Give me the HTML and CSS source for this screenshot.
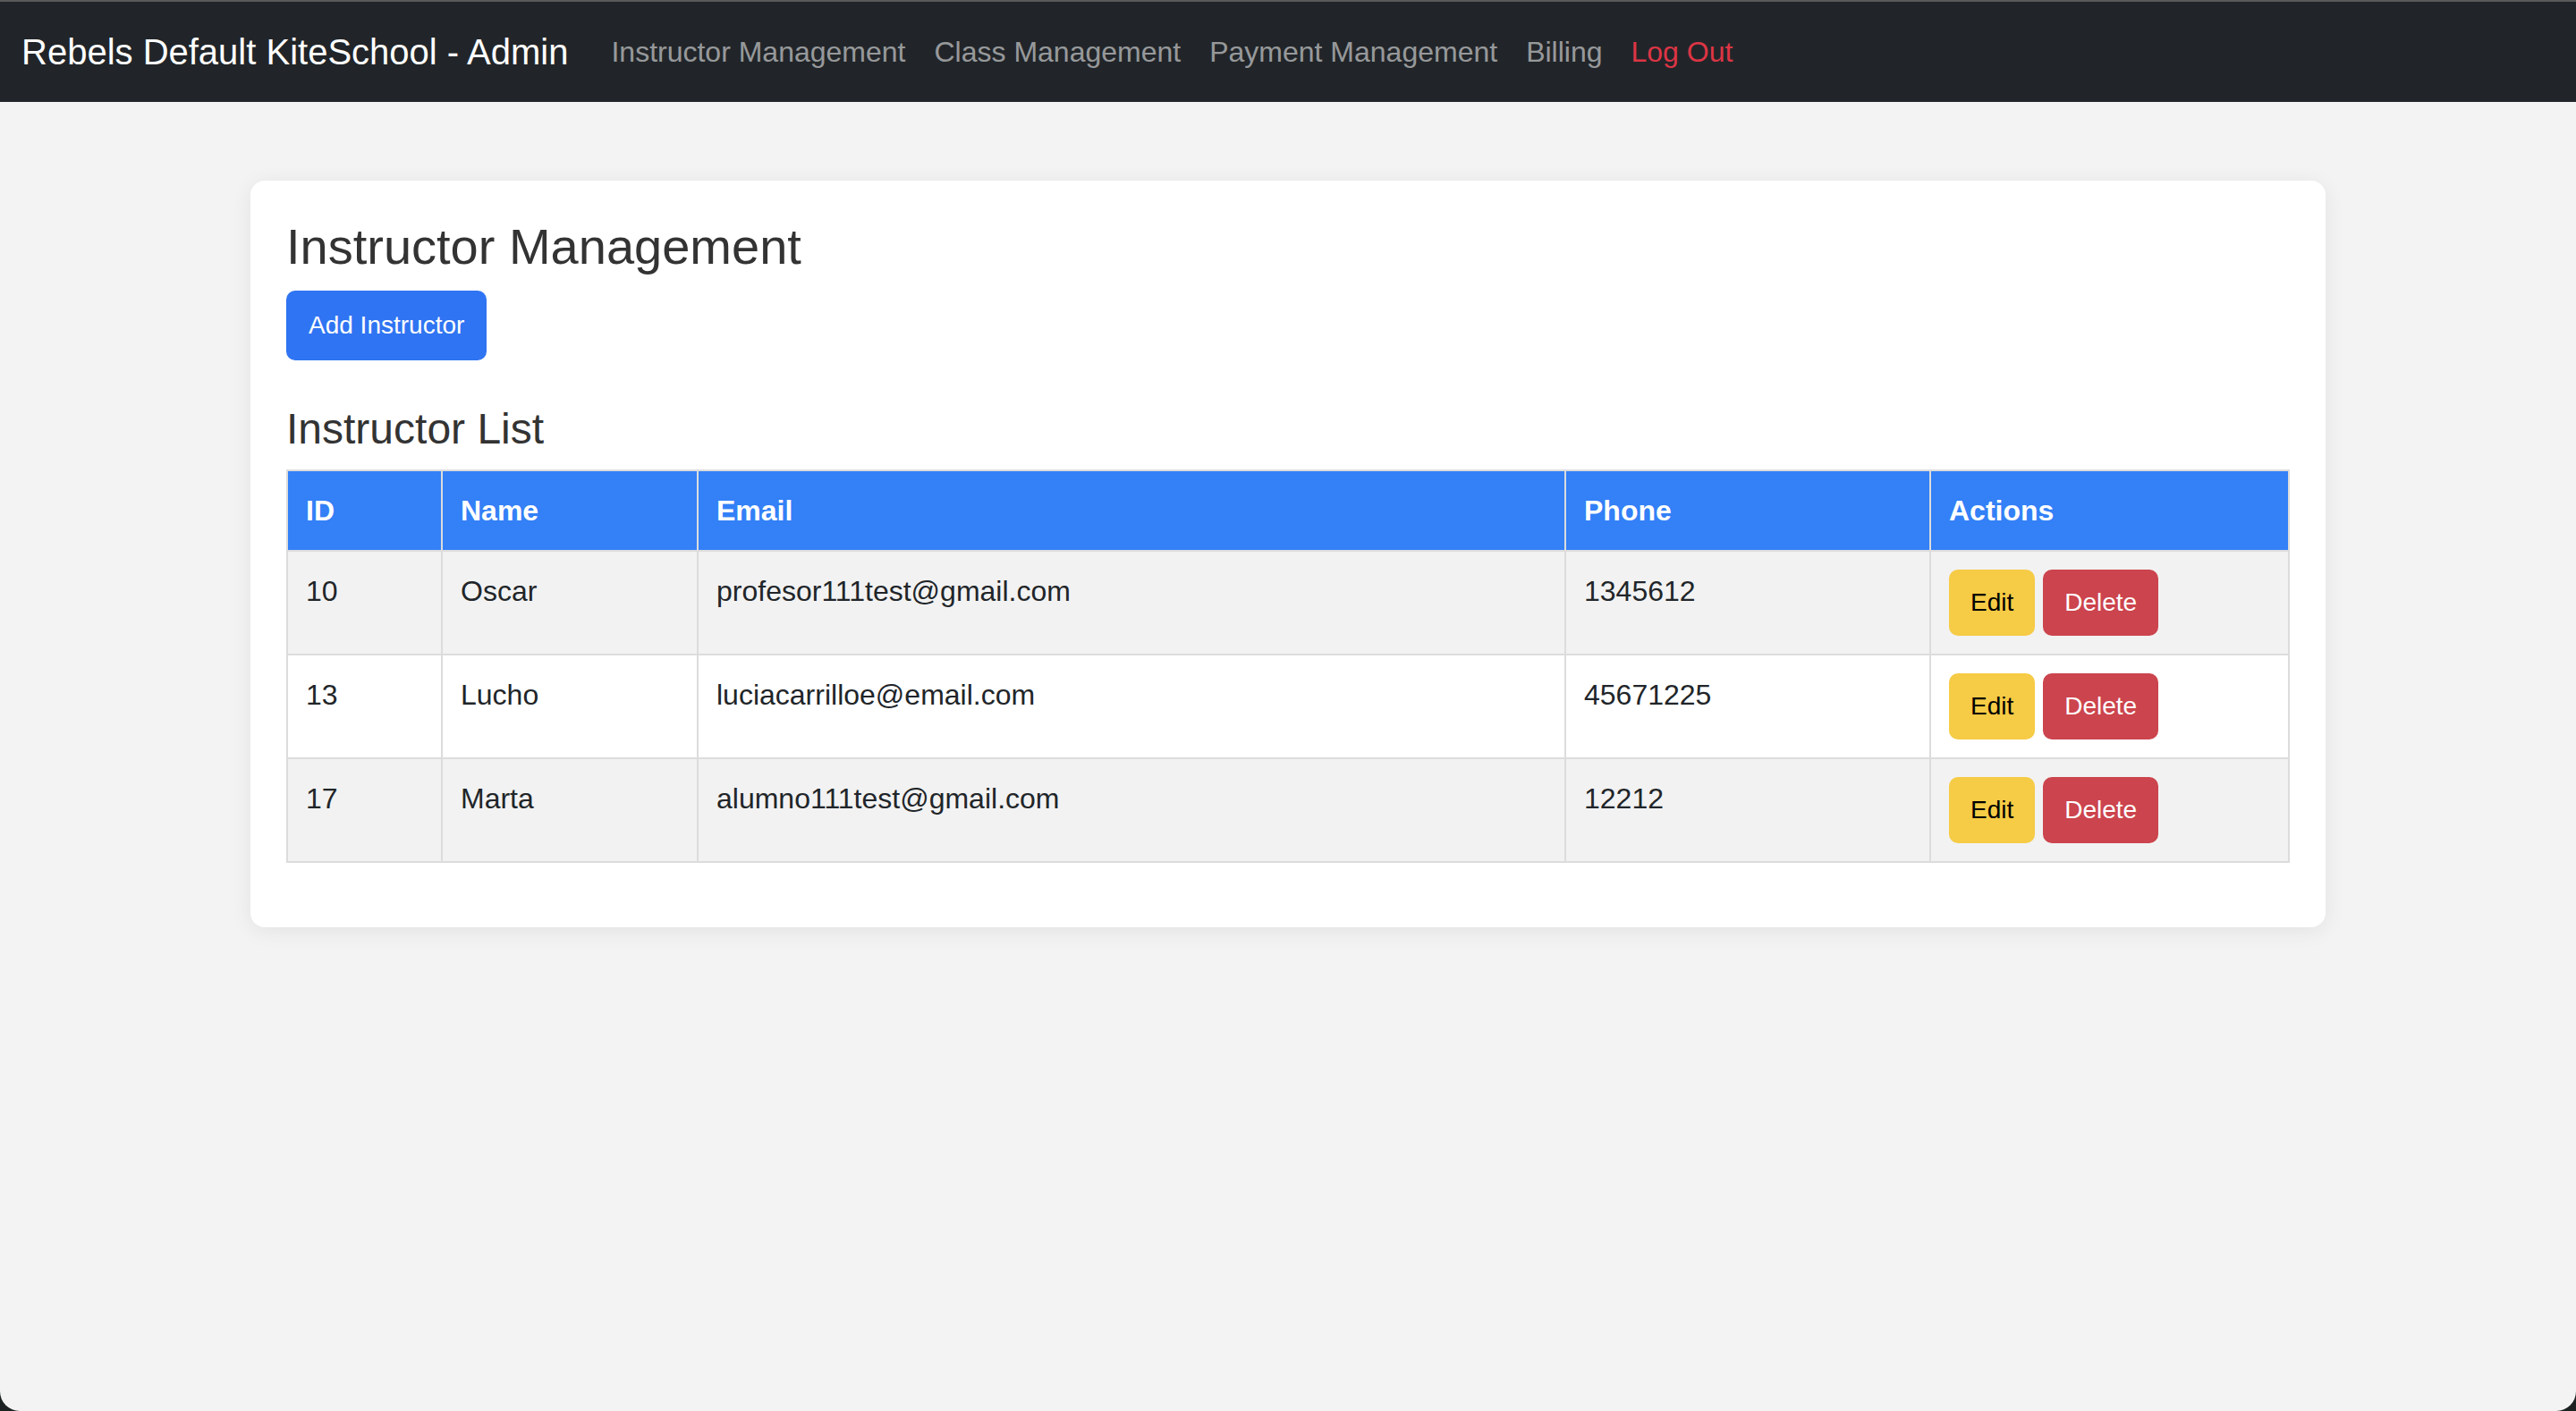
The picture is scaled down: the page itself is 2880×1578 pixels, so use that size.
FILE: index.html
```html
<!DOCTYPE html>
<html lang="en">
<head>
<meta charset="utf-8">
<title>Instructor Management</title>
<link rel="stylesheet" href="styles.css">
</head>
<body>
<div class="window">
  <nav class="navbar">
    <a class="brand" href="#">Rebels Default KiteSchool - Admin</a>
    <ul class="nav">
      <li><a class="nav-link" href="#">Instructor Management</a></li>
      <li><a class="nav-link" href="#">Class Management</a></li>
      <li><a class="nav-link" href="#">Payment Management</a></li>
      <li><a class="nav-link" href="#">Billing</a></li>
      <li><a class="nav-link logout" href="#">Log Out</a></li>
    </ul>
  </nav>
  <main class="main">
    <section class="card">
      <h3 class="title">Instructor Management</h3>
      <button class="btn btn-primary">Add Instructor</button>
      <h4 class="subtitle">Instructor List</h4>
      <table class="table">
        <colgroup>
          <col class="col-id">
          <col class="col-name">
          <col class="col-email">
          <col class="col-phone">
          <col class="col-actions">
        </colgroup>
        <thead>
          <tr><th>ID</th><th>Name</th><th>Email</th><th>Phone</th><th>Actions</th></tr>
        </thead>
        <tbody>
          <tr>
            <td>10</td><td>Oscar</td><td>profesor111test@gmail.com</td><td>1345612</td>
            <td><div class="actions"><button class="btn btn-warning">Edit</button><button class="btn btn-danger">Delete</button></div></td>
          </tr>
          <tr>
            <td>13</td><td>Lucho</td><td>luciacarrilloe@email.com</td><td>45671225</td>
            <td><div class="actions"><button class="btn btn-warning">Edit</button><button class="btn btn-danger">Delete</button></div></td>
          </tr>
          <tr>
            <td>17</td><td>Marta</td><td>alumno111test@gmail.com</td><td>12212</td>
            <td><div class="actions"><button class="btn btn-warning">Edit</button><button class="btn btn-danger">Delete</button></div></td>
          </tr>
        </tbody>
      </table>
    </section>
  </main>
</div>
</body>
</html>
```

FILE: styles.css
```css
* { box-sizing: border-box; }
html, body {
  margin: 0;
  padding: 0;
  background: #1c2121;
}
body {
  font-family: "Liberation Sans", Arial, Helvetica, sans-serif;
  color: #212529;
}
.window {
  min-height: 1578px;
  background: #f3f3f3;
  border-top: 2px solid #5a5a5a;
  border-radius: 0 0 22px 22px;
  overflow: hidden;
}
.navbar {
  display: flex;
  align-items: center;
  height: 112px;
  padding: 16px 24px;
  background: #212529;
}
.brand {
  font-size: 40px;
  line-height: 60px;
  padding: 10px 0;
  margin-right: 32px;
  color: #fff;
  text-decoration: none;
  white-space: nowrap;
}
.nav {
  display: flex;
  list-style: none;
  margin: 0;
  padding: 0;
}
.nav-link {
  display: block;
  padding: 16px 16px;
  font-size: 32px;
  line-height: 48px;
  color: rgba(255, 255, 255, 0.55);
  text-decoration: none;
  white-space: nowrap;
}
.nav-link.logout { color: #dc3545; }
.main {
  padding-top: 88px;
}
.card {
  width: 2320px;
  margin: 0 auto;
  padding: 40px;
  background: #fff;
  border-radius: 16px;
  box-shadow: 0 4px 24px rgba(0, 0, 0, 0.07);
}
.title {
  margin: 0 0 16px;
  font-size: 56px;
  line-height: 67px;
  font-weight: 400;
  color: #333;
}
.subtitle {
  margin: 48px 0 16px;
  font-size: 48px;
  line-height: 58px;
  font-weight: 400;
  color: #333;
}
.btn {
  display: inline-block;
  border: 0;
  border-radius: 10px;
  font-family: "Liberation Sans", Arial, Helvetica, sans-serif;
  font-size: 28px;
  line-height: 42px;
  padding: 16px 24px;
  cursor: pointer;
}
.btn-primary {
  padding: 18px 25px;
  background: #2f74f2;
  color: #fff;
}
.btn-warning {
  background: #f6cb45;
  color: #000;
}
.btn-danger {
  background: #cc444d;
  color: #fff;
}
.actions {
  display: flex;
  gap: 9px;
}
.table {
  width: 2238px;
  table-layout: fixed;
  border-collapse: collapse;
  border: 2px solid #dcdcdc;
  margin-bottom: 32px;
}
.col-id { width: 173px; }
.col-name { width: 286px; }
.col-email { width: 970px; }
.col-phone { width: 408px; }
.col-actions { width: 401px; }
.table th,
.table td {
  border: 2px solid #dcdcdc;
  padding: 20px 20px;
  font-size: 32px;
  line-height: 48px;
  text-align: left;
  vertical-align: top;
}
.table th {
  background: #3380f7;
  color: #fff;
  font-weight: 700;
}
.table tbody tr:nth-child(odd) { background: #f2f2f2; }
.table tbody tr:nth-child(even) { background: #fff; }
```
